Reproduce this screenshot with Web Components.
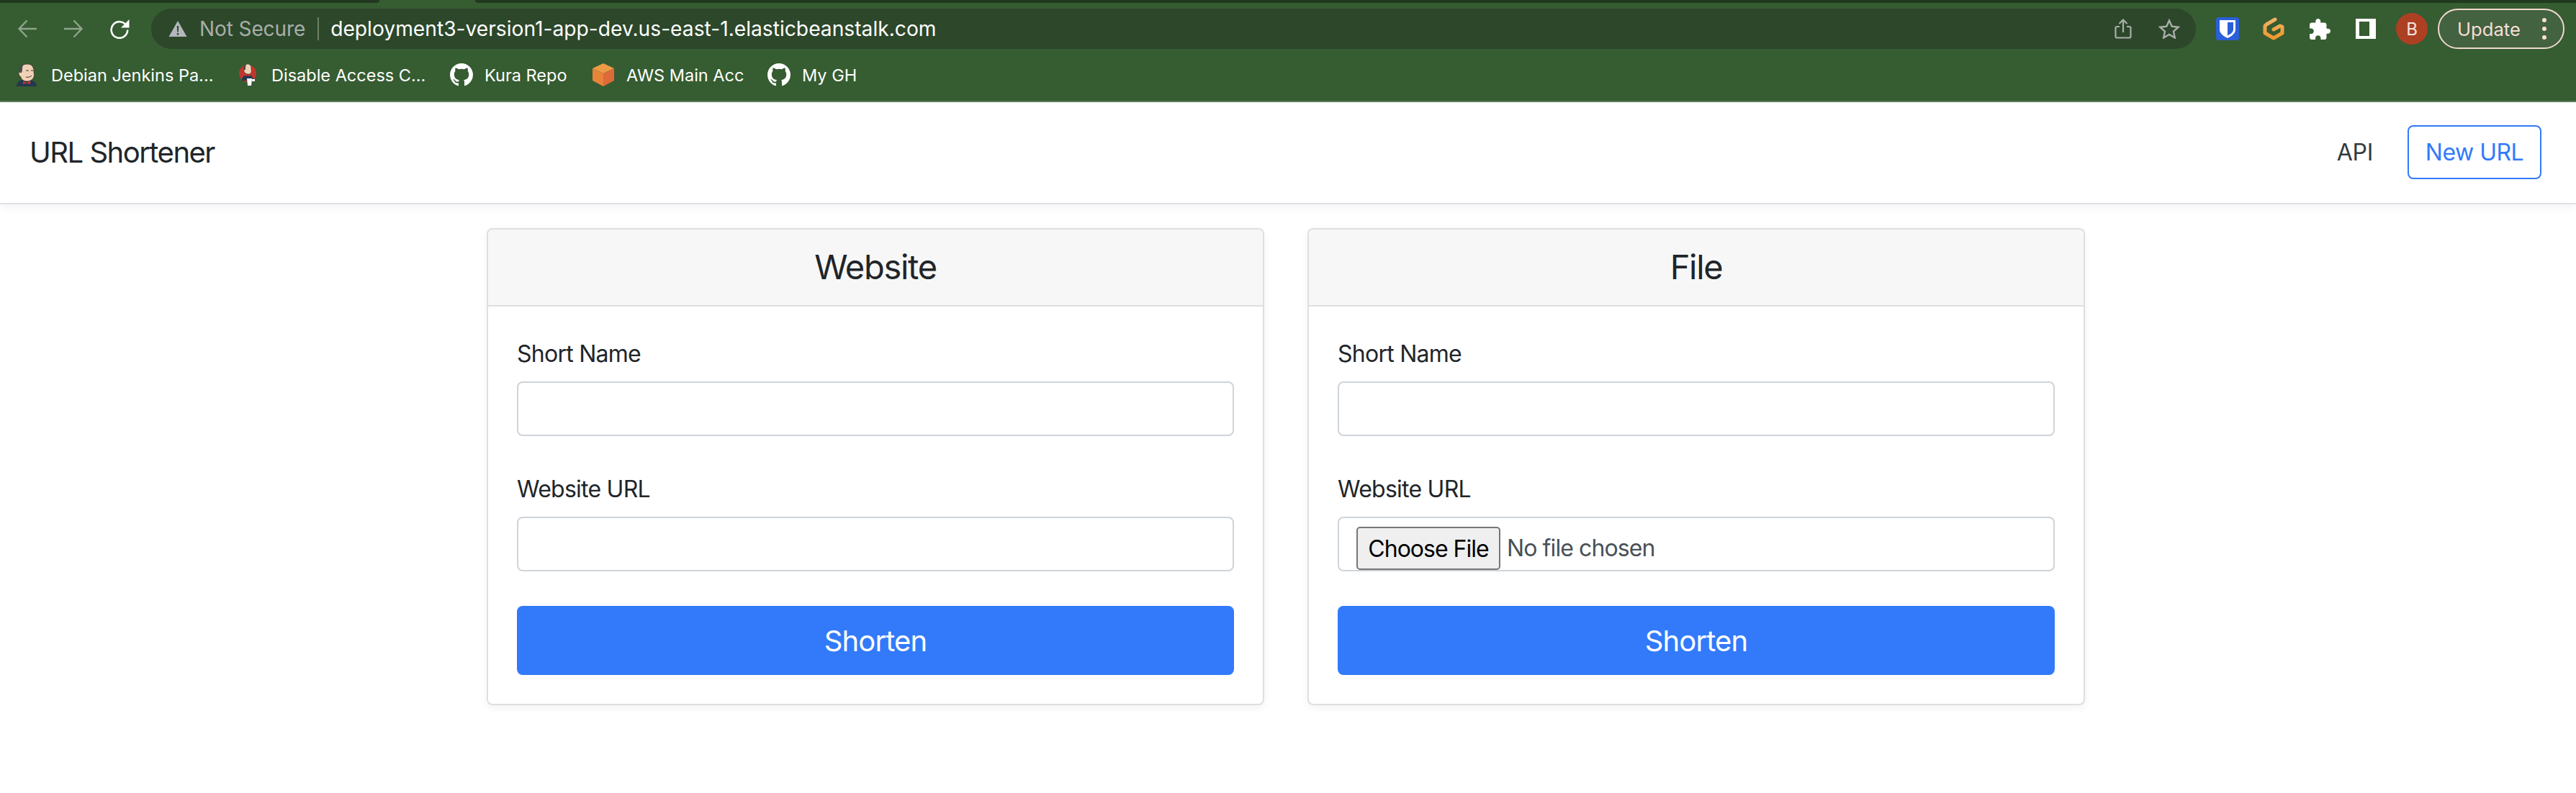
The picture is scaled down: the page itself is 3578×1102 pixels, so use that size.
<!DOCTYPE html>
<html lang="en">
<head>
<meta charset="utf-8">
<title>URL Shortener</title>
<style>
html, body { margin: 0; height: 100%; background: #fff; overflow: hidden; }
body { font-family: Inter, "Liberation Sans", sans-serif; color: #212529; }
</style>
</head>
<body>
<browser-chrome></browser-chrome>
<app-navbar></app-navbar>
<main-cards>
  <url-card title="Website">
    <form-field label="Short Name"></form-field>
    <form-field label="Website URL"></form-field>
  </url-card>
  <url-card title="File">
    <form-field label="Short Name"></form-field>
    <form-field label="Website URL" type="file"></form-field>
  </url-card>
</main-cards>

<script>
const GITHUB = `<svg viewBox="0 0 16 16" width="32" height="32"><path fill="#fff" d="M8 0C3.58 0 0 3.58 0 8c0 3.54 2.29 6.53 5.47 7.59.4.07.55-.17.55-.38 0-.19-.01-.82-.01-1.49-2.01.37-2.53-.49-2.69-.94-.09-.23-.48-.94-.82-1.13-.28-.15-.68-.52-.01-.53.63-.01 1.08.58 1.23.82.72 1.21 1.87.87 2.33.66.07-.52.28-.87.51-1.07-1.78-.2-3.64-.89-3.64-3.95 0-.87.31-1.59.82-2.15-.08-.2-.36-1.02.08-2.12 0 0 .67-.21 2.2.82.64-.18 1.32-.27 2-.27.68 0 1.36.09 2 .27 1.53-1.04 2.2-.82 2.2-.82.44 1.1.16 1.92.08 2.12.51.56.82 1.27.82 2.15 0 3.07-1.87 3.75-3.65 3.95.29.25.54.73.54 1.48 0 1.07-.01 1.93-.01 2.2 0 .21.15.46.55.38A8.013 8.013 0 0016 8c0-4.42-3.58-8-8-8z"/></svg>`;

const ICONS = {
  back: `<svg viewBox="0 0 28 28" width="28" height="28"><path fill="none" stroke="#8ea58b" stroke-width="2.4" d="M27 14H3M13.500 2.500 2.500 14l11 11.500"/></svg>`,
  forward: `<svg viewBox="0 0 28 28" width="28" height="28"><path fill="none" stroke="#8ea58b" stroke-width="2.4" d="M1 14h24M14.500 2.500 25.500 14l-11 11.500"/></svg>`,
  reload: `<svg viewBox="0 0 28 28" width="28" height="28"><path fill="none" stroke="#fff" stroke-width="2.600" d="M23.500 9.500A11.300 11.300 0 1 0 25.200 15.500"/><path fill="#fff" d="M27.500 1v11.500H16z"/></svg>`,
  warn: `<svg viewBox="0 0 26 24" width="26" height="24"><path fill="#b4b8bc" d="M13 1 25.500 23H.5z"/><path fill="#2c472a" d="M11.800 8h2.400l-.4 8.500h-1.600zM11.800 18h2.400v2.400h-2.400z"/></svg>`,
  share: `<svg viewBox="0 0 24 28" width="24" height="28"><path fill="none" stroke="#a9afa9" stroke-width="2.200" d="M7 11H3.500a2 2 0 0 0-2 2v11.500a2 2 0 0 0 2 2h17a2 2 0 0 0 2-2V13a2 2 0 0 0-2-2H17M12 19V2M6.500 7 12 1.500 17.500 7"/></svg>`,
  star: `<svg viewBox="0 0 30 28" width="30" height="28"><path fill="none" stroke="#a9afa9" stroke-width="2.400" d="M15 2.500l3.700 8.200 8.900 1-6.600 6 1.800 8.800-7.800-4.500-7.800 4.500 1.800-8.800-6.600-6 8.900-1z"/></svg>`,
  bitwarden: `<svg viewBox="0 0 32 32" width="32" height="32"><rect width="32" height="32" rx="4" fill="#2a5fd9"/><path fill="#fff" d="M5 4h22v13c0 6-6 9.500-11 12C11 26.500 5 23 5 17z"/><path fill="#2a5fd9" d="M16 7h8v10c0 3.800-4 6.400-8 8.500z"/></svg>`,
  gitpod: `<svg viewBox="0 0 30 32" width="30" height="32"><defs><linearGradient id="g" x1="0" y1="0" x2="0" y2="1"><stop offset="0" stop-color="#f3b365"/><stop offset="1" stop-color="#f0962c"/></linearGradient></defs><path fill="none" stroke="url(#g)" stroke-width="5" stroke-linecap="round" stroke-linejoin="round" d="M17 3 5 10 3 12v10l12 7 12-7V13l-3-1-9 5"/></svg>`,
  puzzle: `<svg viewBox="2 1 21 21" width="29" height="29"><path fill="#fff" d="M20.500 11H19V7c0-1.100-.9-2-2-2h-4V3.500C13 2.120 11.880 1 10.500 1S8 2.120 8 3.500V5H4c-1.100 0-1.990.9-1.990 2v3.800H3.500c1.490 0 2.700 1.210 2.700 2.700s-1.210 2.700-2.700 2.700H2V20c0 1.100.9 2 2 2h3.800v-1.500c0-1.490 1.210-2.700 2.700-2.700 1.490 0 2.700 1.210 2.700 2.700V22H17c1.100 0 2-.9 2-2v-4h1.500c1.380 0 2.500-1.120 2.500-2.500S21.880 11 20.500 11z"/></svg>`,
  sidebar: `<svg viewBox="0 0 28 28" width="28" height="28"><path fill="#fff" fill-rule="evenodd" d="M0 0h28v28H0zM5 4v20h14V4z"/></svg>`,
  jenkins: `<svg viewBox="0 0 30 32" width="30" height="32"><path fill="#24384f" d="M1 32c0-5 3-8 8-9h11c5 1 9 4 9 9z"/><path fill="#f1d2b6" stroke="#3a3231" stroke-width=".8" d="M6 9c0-5 4-8 10-8s9 4 9 10c0 3 1 5 0 8s-5 6-9 6c-5 0-8-2-9-6-1-1-3-2-3-5s1-4 2-5z"/><path fill="#4b4a4c" d="M5 13C4 7 7 2 12 1c-3 2-3 5-3 8l-1 4z"/><path fill="none" stroke="#3a3231" stroke-width="1" d="M14 10h4M21 10h3M14 19c3 1 6 0 8-2"/><path fill="#d8322c" d="M10 25l5 2 5-3v5l-5-1.500L10 29z"/></svg>`,
  jenkinsCircle: `<svg viewBox="0 0 24 32" width="24" height="32"><circle cx="12" cy="14" r="12" fill="#c0362e"/><path fill="#f1d2b6" stroke="#3a3231" stroke-width=".7" d="M7 7c0-4 2-6 5-6s5 2 5 6c0 3 1 5-1 7s-6 1-8-1-1-4-1-6z"/><path fill="#4b4a4c" d="M7 9C6 5 8 2 10 1.500 9 4 9 6 9 9z"/><path fill="#24384f" d="M4 24c0-5 3-8 8-8s8 3 8 8H4z"/><path fill="#d8322c" d="M9 15l3 1.500 3-1.500v3l-3-1-3 1z"/><path fill="#fff" d="M11 21h7l-1 10h-5zM18 22h4v3h-4z"/></svg>`,
  aws: `<svg viewBox="0 0 30 32" width="30" height="32"><path fill="#ee9b45" d="M15 0 30 7 15 14 0 7z"/><path fill="#e8833a" d="M0 7l15 7v18L0 24z"/><path fill="#dd6a38" d="M30 7 15 14v18l15-8z"/></svg>`,
  github: GITHUB
};

class ChromeIcon extends HTMLElement {
  connectedCallback() {
    this.attachShadow({mode: 'open'});
    this.shadowRoot.innerHTML = `<style>:host{display:flex;flex:none;align-items:center;justify-content:center;}svg{display:block;}</style>${ICONS[this.getAttribute('name')]}`;
  }
}
customElements.define('chrome-icon', ChromeIcon);

class BookmarkItem extends HTMLElement {
  connectedCallback() {
    this.attachShadow({mode: 'open'});
    this.shadowRoot.innerHTML = `
<style>
:host { display: flex; align-items: center; gap: var(--icon-gap, 16px); flex: none; }
span { font-size: 23.500px; color: #fff; white-space: nowrap; width: var(--label-w); }
</style>
<chrome-icon name="${this.getAttribute('icon')}"></chrome-icon><span><slot></slot></span>`;
  }
}
customElements.define('bookmark-item', BookmarkItem);

class BrowserChrome extends HTMLElement {
  constructor() {
    super();
    this.attachShadow({mode: 'open'});
    this.shadowRoot.innerHTML = `
<style>
:host { display: block; height: 142px; background: #365c31; box-sizing: border-box; border-bottom: 2px solid #5f7e5c; }
.tabs { height: 4px; display: flex; }
.tabs i { background: #21391f; }
.tabs i:first-child { width: 527px; border-bottom-right-radius: 5px; }
.tabs i:last-child { flex: 1; margin-left: 133px; border-bottom-left-radius: 5px; }
.toolbar { height: 56px; margin-top: 8px; display: flex; align-items: center; padding-left: 24px; }
.toolbar .fwd { margin-left: 36px; }
.toolbar .rel { margin-left: 36px; }
.omni { margin-left: 30px; width: 2840px; height: 56px; border-radius: 28px; background: #2c472a; display: flex; align-items: center; padding-left: 24px; box-sizing: border-box; font-size: 28px; }
.sec { color: #a9aeaa; margin-left: 17px; white-space: nowrap; letter-spacing: -.1px; }
.sep { width: 2px; height: 32px; background: #6d8069; margin: 0 16px 0 17px; }
.url { color: #fff; white-space: nowrap; flex: 1; font-size: 28.200px; }
.omni .share { margin-right: 37px; }
.omni .star { margin-right: 22px; }
.ext { margin-left: 28px; }
.ext.g { margin-left: 33px; }
.ext.p { margin-left: 35px; }
.ext.s { margin-left: 35px; }
.avatar { margin-left: 28px; width: 44px; height: 44px; border-radius: 50%; background: #ad4023; color: #f7e3dc; font-size: 24px; display: flex; align-items: center; justify-content: center; flex: none; }
.update { margin-left: 14px; width: 176px; height: 56px; box-sizing: border-box; border: 2px solid #f0d8cf; border-radius: 28px; background: #436240; color: #f6dfd7; font-size: 25.600px; display: flex; align-items: center; padding-left: 25px; flex: none; }
.dots { display: flex; flex-direction: column; gap: 6px; margin-left: 30px; }
.dots i { width: 6px; height: 6px; border-radius: 50%; background: #f6dfd7; display: block; }
.bookmarks { height: 72px; display: flex; align-items: center; gap: 34px; padding: 0 0 0 22px; }
.b1 { --icon-gap: 19px; --label-w: 227px; }
.b2 { --icon-gap: 21px; --label-w: 214px; }
.b3 { --label-w: 116px; }
.b4 { --icon-gap: 17px; --label-w: 162px; }
.b5 { --label-w: 77px; }
</style>
<div class="tabs"><i></i><i></i></div>
<div class="toolbar">
  <chrome-icon name="back"></chrome-icon>
  <chrome-icon class="fwd" name="forward"></chrome-icon>
  <chrome-icon class="rel" name="reload"></chrome-icon>
  <div class="omni">
    <chrome-icon name="warn"></chrome-icon>
    <span class="sec">Not Secure</span><span class="sep"></span>
    <span class="url">deployment3-version1-app-dev.us-east-1.elasticbeanstalk.com</span>
    <chrome-icon class="share" name="share"></chrome-icon>
    <chrome-icon class="star" name="star"></chrome-icon>
  </div>
  <chrome-icon class="ext" name="bitwarden"></chrome-icon>
  <chrome-icon class="ext g" name="gitpod"></chrome-icon>
  <chrome-icon class="ext p" name="puzzle"></chrome-icon>
  <chrome-icon class="ext s" name="sidebar"></chrome-icon>
  <div class="avatar">B</div>
  <div class="update">Update<span class="dots"><i></i><i></i><i></i></span></div>
</div>
<div class="bookmarks">
  <bookmark-item class="b1" icon="jenkins">Debian Jenkins Pa...</bookmark-item>
  <bookmark-item class="b2" icon="jenkinsCircle">Disable Access C...</bookmark-item>
  <bookmark-item class="b3" icon="github">Kura Repo</bookmark-item>
  <bookmark-item class="b4" icon="aws">AWS Main Acc</bookmark-item>
  <bookmark-item class="b5" icon="github">My GH</bookmark-item>
</div>`;
  }
}
customElements.define('browser-chrome', BrowserChrome);

class AppNavbar extends HTMLElement {
  constructor() {
    super();
    this.attachShadow({mode: 'open'});
    this.shadowRoot.innerHTML = `
<style>
:host { display: flex; align-items: center; height: 142px; box-sizing: border-box; padding: 0 48px 2px 41px; background: #fff; border-bottom: 2px solid #dee2e6; box-shadow: 0 4px 12px rgba(0,0,0,.05); position: relative; }
.brand { font-size: 40px; color: #212529; flex: 1; letter-spacing: -1.5px; }
.api { font-size: 32px; color: #343a40; margin-right: 48px; letter-spacing: -.3px; }
.new { width: 186px; height: 75px; box-sizing: border-box; border: 2px solid #327afa; border-radius: 8px; color: #327afa; font-size: 32px; display: flex; align-items: center; justify-content: center; letter-spacing: -.5px; }
</style>
<span class="brand">URL Shortener</span>
<span class="api">API</span>
<span class="new">New URL</span>`;
  }
}
customElements.define('app-navbar', AppNavbar);

class MainCards extends HTMLElement {
  constructor() {
    super();
    this.attachShadow({mode: 'open'});
    this.shadowRoot.innerHTML = `
<style>:host { display: flex; gap: 60px; padding: 33px 0 0 676px; }</style>
<slot></slot>`;
  }
}
customElements.define('main-cards', MainCards);

class UrlCard extends HTMLElement {
  connectedCallback() {
    this.attachShadow({mode: 'open'});
    this.shadowRoot.innerHTML = `
<style>
:host { display: block; width: 1080px; box-sizing: border-box; border: 2px solid rgba(0,0,0,.125); border-radius: 8px; box-shadow: 0 4px 12px rgba(0,0,0,.05); background: #fff; }
header { height: 105px; box-sizing: border-box; padding-bottom: 3px; background: #f7f7f7; border-radius: 6px 6px 0 0; display: flex; align-items: center; justify-content: center; font-size: 47px; color: #212529; letter-spacing: -1.3px; }
.rule { height: 2px; background: rgba(0,0,0,.125); }
.body { padding: 40px; display: flex; flex-direction: column; gap: 48px; }
.submit { height: 96px; border-radius: 8px; background: #327afa; color: #fff; font-size: 40px; display: flex; align-items: center; justify-content: center; letter-spacing: -.9px; }
</style>
<header>${this.getAttribute('title')}</header>
<div class="rule"></div>
<div class="body">
  <slot></slot>
  <div class="submit">Shorten</div>
</div>`;
  }
}
customElements.define('url-card', UrlCard);

class FormField extends HTMLElement {
  connectedCallback() {
    this.attachShadow({mode: 'open'});
    const file = this.getAttribute('type') === 'file';
    this.shadowRoot.innerHTML = `
<style>
:host { display: flex; flex-direction: column; gap: 14px; }
label { font-size: 32px; line-height: 48px; padding-top: 2px; color: #212529; letter-spacing: -.75px; }
.control { height: 76px; box-sizing: border-box; border: 2px solid #ced4da; border-radius: 8px; background: #fff; display: flex; align-items: flex-end; padding-left: 24px; overflow: hidden; }
.pick { width: 200px; height: 60px; box-sizing: border-box; border: 2px solid #767676; border-radius: 5px; background: #efefef; color: #000; font-size: 32px; display: flex; align-items: center; justify-content: center; letter-spacing: -1px; }
.none { font-size: 32px; color: #495057; line-height: 60px; margin-left: 9px; letter-spacing: -.9px; }
</style>
<label>${this.getAttribute('label')}</label>
<div class="control">${file ? '<span class="pick">Choose File</span><span class="none">No file chosen</span>' : ''}</div>`;
  }
}
customElements.define('form-field', FormField);
</script>
</body>
</html>
